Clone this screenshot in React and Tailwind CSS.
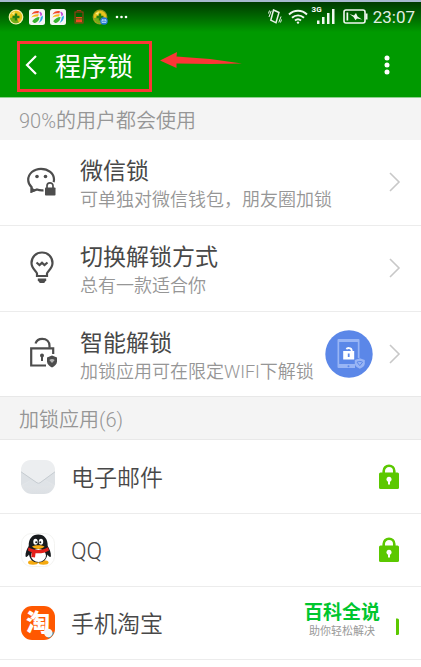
import { clsx } from 'clsx'

const features = [
  { id: 'wechat', title: '微信锁', desc: '可单独对微信钱包，朋友圈加锁', Icon: ChatLockIcon },
  { id: 'method', title: '切换解锁方式', desc: '总有一款适合你', Icon: BulbIcon },
  { id: 'smart', title: '智能解锁', desc: '加锁应用可在限定WIFI下解锁', Icon: SmartLockIcon, badge: true },
]

const apps = [
  { id: 'mail', name: '电子邮件', Icon: MailIcon },
  { id: 'qq', name: 'QQ', Icon: PenguinIcon },
  { id: 'taobao', name: '手机淘宝', Icon: TaobaoIcon },
]

function ChatLockIcon() {
  return (
    <svg width="32" height="32" viewBox="0 0 32 32" fill="none">
      <path
        d="M18.500 26.300c-2 .2-4.500 0-6.500-.8L6.500 27.500l.2-4.200C4.500 21.300 3.200 18.900 3.200 16 3.200 9.700 8.700 4.800 16 4.800S29 9.500 29 15.600c0 1-.1 1.800-.4 2.600"
        stroke="#4d4d4d"
        strokeWidth="2.200"
      />
      <path d="m5.500 23 .3 6 6-2.500z" fill="#4d4d4d" />
      <circle cx="12" cy="12.500" r="1.800" fill="#4d4d4d" />
      <circle cx="20.500" cy="12.500" r="1.800" fill="#4d4d4d" />
      <path d="M22 24v-2.200a3 3 0 0 1 6 0V24" stroke="#4d4d4d" strokeWidth="1.700" />
      <rect x="20" y="23.500" width="10.500" height="8" rx=".8" fill="#4d4d4d" />
    </svg>
  )
}

function BulbIcon() {
  return (
    <svg width="32" height="36" viewBox="0 0 32 36" fill="none">
      <path
        d="M12 28v-2.500c0-2-5.500-4.500-5.500-10.500C6.500 9 11 4.500 17 4.500S27.500 9 27.500 15c0 6-5.500 8.500-5.500 10.500V28z"
        stroke="#4d4d4d"
        strokeWidth="2.200"
      />
      <path d="m11.500 14.500 3 2.500 2.500-2.200 2.500 2.200 3-2.500" stroke="#4d4d4d" strokeWidth="2.200" />
      <path d="M12.800 30.500h8.400v1.700l-2 2.800h-4.400l-2-2.800z" fill="#4d4d4d" />
    </svg>
  )
}

function SmartLockIcon() {
  return (
    <svg width="32" height="32" viewBox="0 0 32 32" fill="none">
      <path d="M21 29.500H6.200V12.300h22V18" stroke="#4d4d4d" strokeWidth="2.200" />
      <path d="M10.500 7.500C11.500 4.500 14 2.800 17.200 2.800c4.500 0 7.300 3 7.300 7v2" stroke="#4d4d4d" strokeWidth="2.200" />
      <circle cx="17" cy="19.500" r="2" fill="#4d4d4d" />
      <path d="M17 20v5" stroke="#4d4d4d" strokeWidth="2" />
      <path d="m27 19.500 5 2v4c0 2.800-2.500 4.800-5 6-2.500-1.200-5-3.200-5-6v-4z" fill="#4d4d4d" />
      <path d="M24.300 24c1.800-1.300 3.600-1.300 5.400 0L27 27z" fill="#b5b5b5" />
    </svg>
  )
}

function MailIcon() {
  return (
    <svg width="34" height="34" viewBox="0 0 34 34">
      <defs>
        <linearGradient id="mail" x1="0" y1="0" x2="0" y2="1">
          <stop offset="0" stopColor="#eff0f1" />
          <stop offset="1" stopColor="#dce0e4" />
        </linearGradient>
      </defs>
      <rect width="34" height="34" rx="11" fill="url(#mail)" />
      <path d="M0 12v13l13-6.500zM34 12v13l-13-6.500z" fill="#dde1e5" />
      <path d="m2 26 11-8h8l11 8" fill="#dfe3e7" />
      <path d="M0 11.500 16 22.800q1.500.9 3 0L34 11.500Q34 0 23 0H11Q0 0 0 11.500" fill="#eceef0" />
      <path d="M0 11.800 16 22.800q1.500.9 3 0L34 11.800" fill="none" stroke="#c6ccd1" strokeWidth="1" />
    </svg>
  )
}

function PenguinIcon() {
  return (
    <svg width="34" height="34" viewBox="0 0 34 34">
      <rect x=".5" y=".5" width="33" height="33" rx="10" fill="#fff" stroke="#f3f3f1" />
      <ellipse cx="12" cy="29.500" rx="5" ry="2.200" fill="#f5a90f" />
      <ellipse cx="22.500" cy="29.500" rx="5" ry="2.200" fill="#f5a90f" />
      <path
        d="M17.200 1.500c-6.200 0-9.700 4.500-9.500 11.500-1.700 3-3.500 6.500-3.200 10 .1 1.800 2 1 3.500-1.500.8 5 4 8 9.200 8s8.400-3 9.200-8c1.500 2.500 3.400 3.300 3.500 1.500.3-3.500-1.500-7-3.200-10C26.900 6 23.400 1.500 17.200 1.500"
        fill="#171a1d"
      />
      <ellipse cx="17.500" cy="22.500" rx="7.500" ry="6.500" fill="#fff" />
      <ellipse cx="14.500" cy="8.800" rx="2.200" ry="3" fill="#fff" />
      <ellipse cx="20" cy="8.800" rx="2.200" ry="3" fill="#fff" />
      <circle cx="15.200" cy="9.200" r="1" fill="#171a1d" />
      <circle cx="19.300" cy="9.200" r="1" fill="#171a1d" />
      <path d="M11 13.500c3-1.700 9.500-1.700 12.500 0-2.500 3.200-10 3.200-12.500 0" fill="#f7ac12" />
      <path d="M7.500 14.300c5.500 3.700 13.500 3.700 19.500 0l1 3.200c-4 2.500-9 3.200-13.500 2.700l-.5 4.300-3.700-.5.500-4.700c-1.300-.4-2.500-1-3.800-1.800z" fill="#e3201b" />
    </svg>
  )
}

function TaobaoIcon() {
  return (
    <span className="relative grid size-[34px] place-items-center overflow-hidden rounded-[11px] bg-[#ff5800] text-[24px] leading-none font-black text-white">
      淘
      <svg className="absolute inset-0" width="34" height="34" viewBox="0 0 34 34">
        <path d="M33 25.500a9 9 0 0 1-6.500 7l2.500-4z" fill="#1b9fd0" />
        <circle cx="27.300" cy="27" r="4.200" fill="#f3f6f7" />
      </svg>
    </span>
  )
}

function PadlockIcon() {
  return (
    <svg width="20" height="25" viewBox="0 0 20 25" fill="none">
      <path d="M4.700 10V7a5.300 5.300 0 0 1 10.600 0v3" stroke="#5bc800" strokeWidth="2.600" />
      <rect y="8.500" width="20" height="16.500" rx="1.500" fill="#5bc800" />
      <circle cx="10" cy="15.300" r="2.500" fill="#fff" />
      <path d="M10 15v5.500" stroke="#fff" strokeWidth="2" />
    </svg>
  )
}

function ChevronIcon() {
  return (
    <svg width="12" height="20" viewBox="0 0 12 20" fill="none" className="shrink-0">
      <path d="m1 1 9 9-9 9" stroke="#c8c8c8" strokeWidth="1.600" />
    </svg>
  )
}

function SmartBadge() {
  return (
    <svg width="48" height="48" viewBox="0 0 48 48" fill="none" className="shrink-0">
      <circle cx="24" cy="24" r="23.700" fill="#5b87e8" />
      <path d="M30 38H13.500a1 1 0 0 1-1-1V10a1 1 0 0 1 1-1h20a1 1 0 0 1 1 1v18h-1.700V12h-18.600v22H30z" fill="#98b5f5" />
      <circle cx="23.500" cy="36.200" r="1" fill="#5b87e8" />
      <path d="M21.500 19.300c.5-1.700 4.800-2 5.200 1V23" stroke="#fff" strokeWidth="1.800" />
      <rect x="18.200" y="21" width="11" height="8.500" fill="#fff" />
      <path d="M23.700 23.500v3.500" stroke="#5b87e8" strokeWidth="1.800" />
      <path d="m34.800 28.200 5 1.800v3.500c0 2.300-2.500 4.300-5 5.300-2.500-1-5-3-5-5.300V30z" fill="#98b5f5" />
      <path d="M32 32.200c1.800-1 3.800-1 5.600 0l-2.800 3.400z" stroke="#5b87e8" strokeWidth="1" />
    </svg>
  )
}

function CloverIcon({ message }) {
  return (
    <svg width="16" height="16" viewBox="0 0 16 16">
      <circle cx="8" cy="8" r="7.400" fill={message ? '#9a9a20' : '#f7efb0'} />
      <circle cx="8" cy="8" r="6.200" fill="#eac51b" />
      <path d="M2 9a6 6 0 0 0 9 4.500L8 8z" fill="#73ad18" />
      <path d="M6.800 4.500h2.400v2.300h2.300v2.400H9.200v2.300H6.800V9.200H4.500V6.800h2.300z" fill="#237d12" />
      <path d="M3.500 4.500 7 2.500 6 6z" fill="#f8ed7f" />
      {message && (
        <>
          <circle cx="12" cy="12" r="3.800" fill="#2378d4" />
          <path d="M10 10.800h4v2.700h-4zl2 1.500 2-1.500" fill="none" stroke="#d9ecff" strokeWidth=".7" />
        </>
      )}
    </svg>
  )
}

// blades fan out from the lower left corner
function RainbowIcon() {
  return (
    <svg width="16" height="16" viewBox="0 0 16 16">
      <rect width="16" height="16" rx="2.500" fill="#f5f5f5" />
      <path d="M2.500 5.500C4 2.500 7 1.500 10 2.200L9.300 4.600C7 4 4.500 4.500 2.500 5.500" fill="#f0472b" />
      <path d="M2.300 8.500C4 5.500 6.500 5 9.800 5.200L9 7.500C6.500 7.200 4.500 7.500 2.300 8.500" fill="#fabd1e" />
      <path d="M3.200 12.300C5 9.500 7.500 8.200 10.500 8c-.3 3.500-2.500 6-5.500 6z" fill="#38b430" />
      <path d="M10.800 2.500c1.700.8 2.500 2 2.300 3.500L11.300 7.500c.1-1.800-.2-3-1-3.700z" fill="#c04bd8" />
      <path d="M13.700 6.500c.6 3-.7 6-4.200 7.500 1.500-2 2-3.800 2.200-5.800z" fill="#29a8e5" />
    </svg>
  )
}

function StatusBar() {
  return (
    <div className="flex h-[30px] items-center justify-between bg-linear-to-b from-[#003a00] to-[#009a00] pr-[6px] pb-px pl-2">
      <div className="flex items-center">
        <CloverIcon />
        <span className="ml-[5px] flex gap-[5px]">
          <RainbowIcon />
          <RainbowIcon />
        </span>
        <svg className="ml-2" width="10" height="14" viewBox="0 0 10 14" fill="none">
          <path d="M3 1.500V.5h4v1" stroke="#a33b17" />
          <rect x="1" y="2" width="8" height="11" stroke="#a33b17" />
          <path d="M2 7h6v1.500H2zM2 9.200h6v3H2z" fill="#ef4b22" />
        </svg>
        <span className="ml-2">
          <CloverIcon message />
        </span>
        <svg className="ml-[7px]" width="14" height="4" viewBox="0 0 14 4" fill="#fff">
          <circle cx="2" cy="2" r="1.300" />
          <circle cx="6.500" cy="2" r="1.300" />
          <circle cx="11" cy="2" r="1.300" />
        </svg>
      </div>
      <div className="flex items-center">
        <svg width="14" height="15" viewBox="0 0 14 15" fill="none" stroke="#e8f3e8">
          <path d="m5.500 1 5.500 2.500-3 10.300L2.800 11.200z" strokeWidth="1.500" />
          <path d="M3.200 1.800 1 8M1.500 1.500.5 4.500M13 7.500l-2.200 6M13.500 10.500l-1 3" />
        </svg>
        <svg className="ml-[6px]" width="20" height="15" viewBox="0 0 20 15" fill="none" stroke="#f1f8f1" strokeWidth="1.900">
          <path d="M1 5.500c5.200-5 12.800-5 18 0M4 8.800c3.500-3.300 8.500-3.300 12 0M7 11.600c1.800-1.500 4.200-1.500 6 0" />
          <circle cx="10" cy="13.600" r="1.200" fill="#f1f8f1" stroke="none" />
        </svg>
        <span className="ml-1 flex items-end pb-[3px]">
          <span className="mb-[10px] text-[8px] leading-[8px] font-bold text-white">3G</span>
          <svg className="-ml-[6px]" width="19" height="16" viewBox="0 0 19 16" fill="#f1f8f1">
            <path d="M1 12.500h2.500V16H1zM6 9h2.500v7H6zM11 5h2.500v11H11zM16 1h2.500v15H16z" />
          </svg>
        </span>
        <svg className="ml-2" width="25" height="15" viewBox="0 0 25 15" fill="none">
          <rect x="1" y="1" width="21" height="13" rx="2" stroke="#f1f8f1" strokeWidth="1.600" />
          <path d="M22.500 4.500h2v6h-2zM3.500 3.500h1.700v8H3.500z" fill="#f1f8f1" />
          <path d="M6.500 5 11 6.500 13 4l1.500 3.500L19 10.500l-5-1-1.500 1.700-2-3.200z" fill="#f1f8f1" />
        </svg>
        <span className="ml-[5px] text-[17px] leading-5 text-[#e3efe3]">23:07</span>
      </div>
    </div>
  )
}

function Header() {
  return (
    <header className="relative border-b border-[#8fd08f] bg-[#009a00]">
      <StatusBar />
      <div className="flex h-[65px] items-center justify-between pr-7 pl-[25px]">
        <div className="flex items-center">
          <button type="button" aria-label="返回">
            <svg width="12" height="20" viewBox="0 0 12 20" fill="none">
              <path d="M11 1 2 10l9 9" stroke="#fff" strokeWidth="2.200" />
            </svg>
          </button>
          <h1 className="ml-[18px] pt-1 text-[26px] leading-8 text-white">程序锁</h1>
        </div>
        <button type="button" aria-label="更多">
          <svg width="12" height="20" viewBox="0 0 12 20" fill="#fff">
            <circle cx="6" cy="3" r="2.500" />
            <circle cx="6" cy="10" r="2.500" />
            <circle cx="6" cy="17" r="2.500" />
          </svg>
        </button>
      </div>
      {/* callout around the title */}
      <div className="pointer-events-none absolute top-[39px] left-[17px] h-[51px] w-[135px] border-3 border-[#fc3636]" />
      <svg className="pointer-events-none absolute top-[49px] left-[160px]" width="82" height="18" viewBox="0 0 82 18">
        <path d="M0 9.500 17 1l-.5 4.500L50 8l32 4.500L50 13l-33.500-.5V17z" fill="#fc3636" />
      </svg>
    </header>
  )
}

function SectionTitle({ children }) {
  return (
    <h2 className="h-[42px] bg-[#f4f4f4] pt-1 pl-[19px] text-[20px] leading-[38px] font-[350] text-[#969696]">
      {children}
    </h2>
  )
}

function FeatureRow({ title, desc, Icon, badge, last }) {
  return (
    <li className={clsx('border-[#ececec]', !last && 'border-b')}>
      <button
        type="button"
        className={clsx('flex w-full items-center pr-5 pl-6 text-left', last ? 'h-[84px]' : 'h-[85px] pb-px')}
      >
        <span className="grid w-[34px] shrink-0 place-items-center pb-1">
          <Icon />
        </span>
        <span className="ml-[22px] flex min-w-0 flex-1 flex-col pt-2 whitespace-nowrap">
          <span className="text-[23px] leading-7 text-[#484848]">{title}</span>
          <span className="text-[18px] leading-7 font-[350] text-[#969696]">{desc}</span>
        </span>
        {badge && (
          <span className="mr-4">
            <SmartBadge />
          </span>
        )}
        <ChevronIcon />
      </button>
    </li>
  )
}

function AppRow({ name, Icon }) {
  return (
    <li className="flex h-[73px] items-center justify-between border-b border-[#ececec] pr-[22px] pb-px pl-[21px] text-[#484848]">
      <span className="flex items-center gap-4">
        <Icon />
        <span className="pt-1 text-[23px] leading-8 font-[350]">{name}</span>
      </span>
      <button type="button" aria-label={`解锁${name}`}>
        <PadlockIcon />
      </button>
    </li>
  )
}

export default function App() {
  return (
    <div className="min-h-screen border-t-2 border-[#a8b9cf] bg-white font-[Roboto,'Noto_Sans_CJK_SC',sans-serif]">
      <Header />
      <main>
        <SectionTitle>90%的用户都会使用</SectionTitle>
        <ul>
          {features.map((f, i) => (
            <FeatureRow key={f.id} {...f} last={i === features.length - 1} />
          ))}
        </ul>
        <div className="border-y border-[#e8e8e8]">
          <SectionTitle>加锁应用(6)</SectionTitle>
        </div>
        <div className="relative pt-px">
          <ul>
            {apps.map((a) => (
              <AppRow key={a.id} {...a} />
            ))}
          </ul>
          <div className="absolute right-[25px] bottom-[21px] flex w-[107px] flex-col items-center bg-white pr-px">
            <span className="text-[19px] leading-6 font-bold text-[#00c62e]">百科全说</span>
            <span className="text-[11px] leading-[14px] text-[#999]">助你轻松解决</span>
          </div>
        </div>
      </main>
    </div>
  )
}
